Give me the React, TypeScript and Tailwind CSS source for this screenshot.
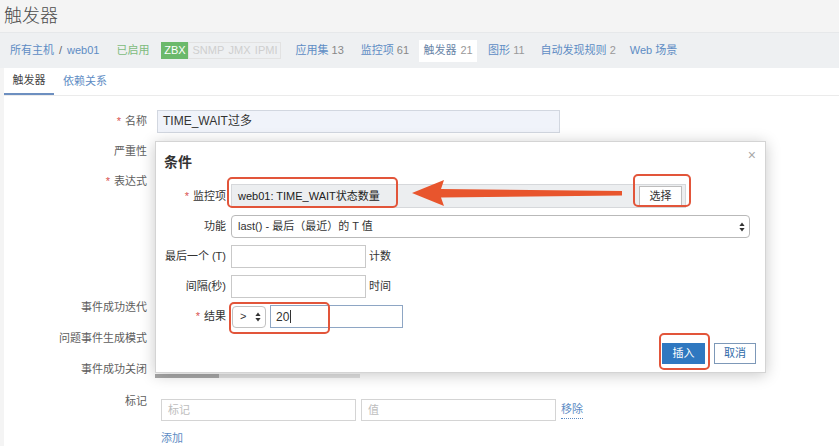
import React from 'react'

const FONT = "font-['Liberation_Sans','Noto_Sans_CJK_SC',sans-serif]"

function Req() {
  return <span className="mr-1 text-[#d9534f]">*</span>
}

function FormRow({ label, required, h, children, top }: { label: string; required?: boolean; h: string; children?: React.ReactNode; top?: boolean }) {
  return (
    <div className={`flex ${h} ${top ? 'items-start pt-[7px]' : 'items-center'}`}>
      <div className="w-[144px] pr-px text-right text-[11px] text-[#5e5e5e]">
        {required && <Req />}
        {label}
      </div>
      <div className="ml-[9px] flex items-center">{children}</div>
    </div>
  )
}

function UpDown() {
  return (
    <svg width="6" height="10" viewBox="0 0 6 10" className="shrink-0">
      <path d="M3 0.5 L5.6 4 H0.4 Z" fill="#333" />
      <path d="M3 9.5 L5.6 6 H0.4 Z" fill="#333" />
    </svg>
  )
}

function ConditionDialog() {
  return (
    <div className="absolute left-[155px] top-[141px] h-[232px] w-[611px] border border-[#d4d4d4] bg-white text-[11px] text-[#333] shadow-[0_2px_14px_rgba(0,0,0,0.22)]">
      <div className="absolute right-[9px] top-[3px] text-[14px] text-[#a8a8a8]">×</div>
      <div className="pl-[8px] pt-[10px] text-[14px] font-bold text-[#333]">条件</div>

      <div className="mt-[11px] flex flex-col gap-[7px]">
        <div className="flex h-[24px] items-center">
          <div className="w-[70px] text-right"><Req />监控项</div>
          <div className="ml-[5px] flex h-[24px] w-[455px] items-center border border-[#d6d8db] bg-[#eceef0] pl-[6px] pr-[3px]">
            <span className="flex-1 text-[11px] text-[#222]">web01: TIME_WAIT状态数量</span>
            <span className="flex h-[20px] w-[43px] items-center justify-center border border-[#bdbdbd] bg-white text-[11px]">选择</span>
          </div>
        </div>
        <div className="flex h-[23px] items-center">
          <div className="w-[70px] text-right">功能</div>
          <div className="ml-[5px] flex h-[23px] w-[519px] items-center justify-between rounded-[4px] border border-[#b9b9b9] bg-white pl-[6px] pr-[4px]">
            <span className="text-[11px]">last() - 最后（最近）的 T 值</span>
            <UpDown />
          </div>
        </div>
        <div className="flex h-[23px] items-center">
          <div className="w-[70px] text-right">最后一个 (T)</div>
          <div className="ml-[5px] h-[23px] w-[135px] border border-[#c9c9c9] bg-white" />
          <span className="ml-[3px]">计数</span>
        </div>
        <div className="flex h-[23px] items-center">
          <div className="w-[70px] text-right">间隔(秒)</div>
          <div className="ml-[5px] h-[23px] w-[135px] border border-[#c9c9c9] bg-white" />
          <span className="ml-[3px]">时间</span>
        </div>
        <div className="flex h-[23px] items-center">
          <div className="w-[70px] text-right"><Req />结果</div>
          <div className="ml-[6px] flex h-[22px] w-[34px] items-center justify-between rounded-[4px] border border-[#c2c2c2] bg-white pl-[7px] pr-[4px]">
            <span>&gt;</span>
            <UpDown />
          </div>
          <div className="ml-[4px] flex h-[23px] w-[133px] items-center border border-[#8ea6c4] bg-white pl-[5px] text-[12px]">
            20<span className="ml-px h-[13px] w-px bg-[#333]" />
          </div>
        </div>
      </div>

      <div className="absolute bottom-[8px] right-[9px] flex gap-[9px]">
        <span className="flex h-[21px] w-[43px] items-center justify-center bg-[#2f78c0] text-white">插入</span>
        <span className="flex h-[21px] w-[42px] items-center justify-center border border-[#7d98b8] bg-white text-[#2f6aa8]">取消</span>
      </div>
    </div>
  )
}

function Annotations() {
  return (
    <>
      <div className="absolute left-[227px] top-[177px] h-[31px] w-[171px] rounded-[5px] border-2 border-[#e2553a]" />
      <div className="absolute left-[633px] top-[174px] h-[33px] w-[58px] rounded-[5px] border-2 border-[#e2553a]" />
      <div className="absolute left-[229px] top-[302px] h-[32px] w-[101px] rounded-[5px] border-2 border-[#e2553a]" />
      <div className="absolute left-[659px] top-[333px] h-[37px] w-[51px] rounded-[5px] border-2 border-[#e2553a]" />
      <svg className="absolute left-[410px] top-[178px]" width="215" height="30" viewBox="0 0 215 30">
        <path d="M2 15 L34 2 L31 11 L212 13 L212 17.5 L31 19.5 L34 28 Z" fill="#e8552d" strokeLinejoin="round" />
      </svg>
    </>
  )
}

export default function App() {
  const navLink = 'text-[11px] text-[#5d8cc4]'
  return (
    <div className={`relative h-[446px] w-[839px] overflow-hidden bg-[#f4f4f4] ${FONT}`}>
      <div className="flex h-[32px] items-center pl-[4px]">
        <h1 className="text-[18px] font-light text-[#4c4c4c]">触发器</h1>
      </div>

      <div className="flex h-[36px] items-center border-t border-[#e6e8ea] bg-[#eef0f2] pl-[10px] text-[11px]">
        <span className={navLink}>所有主机</span>
        <span className="mx-[5px] text-[#666]">/</span>
        <span className={navLink}>web01</span>
        <span className="ml-[17px] text-[#7dbb7d]">已启用</span>
        <span className="ml-[12px] flex h-[17px] w-[27px] items-center justify-center bg-[#6bb96b] text-[11px] text-white">ZBX</span>
        <span className="flex h-[17px] w-[93px] items-center justify-between border border-[#e2e2e2] px-[3px] text-[11px] text-[#cfcfcf]">
          <span>SNMP</span><span>JMX</span><span>IPMI</span>
        </span>
        <span className={`ml-[14px] ${navLink}`}>应用集 <span className="text-[#888]">13</span></span>
        <span className={`ml-[17px] ${navLink}`}>监控项 <span className="text-[#888]">61</span></span>
        <span className="ml-[10px] flex h-[22px] w-[58px] items-center justify-center bg-white text-[#6a86a8]">触发器 <span className="ml-1 text-[#999]">21</span></span>
        <span className={`ml-[11px] ${navLink}`}>图形 <span className="text-[#999]">11</span></span>
        <span className={`ml-[16px] ${navLink}`}>自动发现规则 <span className="text-[#999]">2</span></span>
        <span className={`ml-[14px] ${navLink}`}>Web 场景</span>
      </div>

      <div className="ml-[4px] flex h-[28px] items-end border-b border-[#ebebeb] bg-white text-[11px]">
        <span className="flex h-[28px] w-[50px] items-center justify-center border-b-2 border-[#6d8fc0] text-[#444]">触发器</span>
        <span className="ml-[9px] flex h-[28px] items-center text-[#5d8cc4]">依赖关系</span>
      </div>

      <div className="ml-[4px] h-[360px] bg-white pt-[10px]">
        <FormRow label="名称" required h="h-[30px]">
          <div className="flex h-[23px] w-[403px] items-center border border-[#d2d7e0] bg-[#f0f3fa] pl-[5px] text-[12px] text-[#333]">TIME_WAIT过多</div>
        </FormRow>
        <FormRow label="严重性" h="h-[30px]" />
        <FormRow label="表达式" required h="h-[125px]" top />
        <FormRow label="事件成功迭代" h="h-[32px]" />
        <FormRow label="问题事件生成模式" h="h-[31px]" />
        <FormRow label="事件成功关闭" h="h-[30px]" />
        <div className="flex">
          <div className="w-[144px] pr-px pt-[9px] text-right text-[11px] text-[#5e5e5e]">标记</div>
          <div className="ml-[13px] flex flex-col pt-[15px]">
            <div className="flex items-center gap-[5px] text-[11px]">
              <div className="flex h-[22px] w-[195px] items-center border border-[#d4d4d4] pl-[6px] text-[#bdbdbd]">标记</div>
              <div className="flex h-[22px] w-[195px] items-center border border-[#d4d4d4] pl-[6px] text-[#bdbdbd]">值</div>
              <span className="border-b border-dotted border-[#5d8cc4] text-[#5d8cc4]">移除</span>
            </div>
            <span className="mt-[9px] w-fit border-b border-dotted border-[#5d8cc4] text-[11px] text-[#5d8cc4]">添加</span>
          </div>
        </div>
      </div>

      <div className="absolute left-[155px] top-[374px] flex h-[4px] w-[205px] bg-[#e2e2e2]">
        <div className="h-[4px] w-[64px] bg-[#a9a9a9]" />
      </div>

      <ConditionDialog />
      <Annotations />
    </div>
  )
}
